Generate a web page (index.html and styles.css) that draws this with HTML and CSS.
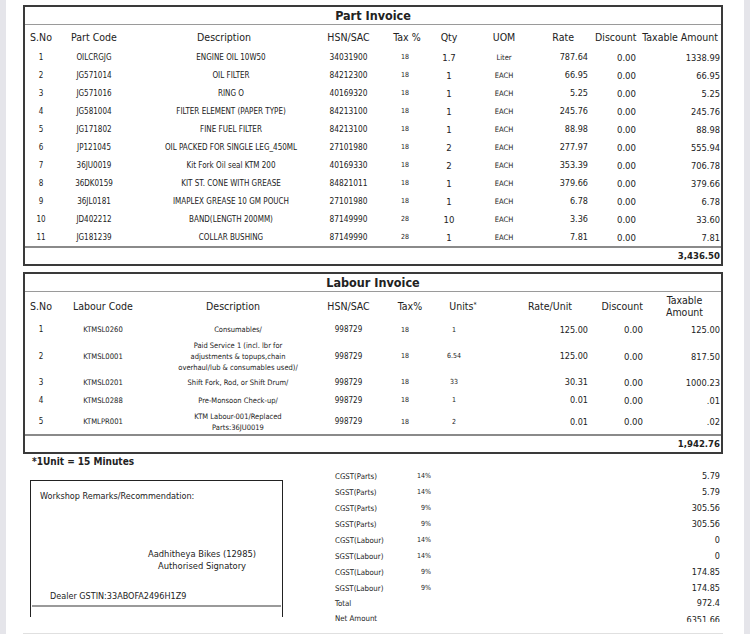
FILE: index.html
```html
<!DOCTYPE html>
<html>
<head>
<meta charset="utf-8">
<link rel="stylesheet" href="styles.css">
</head>
<body>
<div class="page">
  <div class="gutter"></div>
  <main class="sheet">
    <section class="inv">
      <div class="inv-title">Part Invoice</div>
      <table class="grid parts">
        <colgroup><col><col><col><col><col><col><col><col><col><col></colgroup>
        <thead>
          <tr><th>S.No</th><th>Part Code</th><th>Description</th><th>HSN/SAC</th><th>Tax %</th><th>Qty</th><th>UOM</th><th>Rate</th><th>Discount</th><th>Taxable Amount</th></tr>
        </thead>
        <tbody>
          <tr><td>1</td><td>OILCRGJG</td><td>ENGINE OIL 10W50</td><td>34031900</td><td>18</td><td>1.7</td><td>Liter</td><td>787.64</td><td>0.00</td><td>1338.99</td></tr>
          <tr><td>2</td><td>JG571014</td><td>OIL FILTER</td><td>84212300</td><td>18</td><td>1</td><td>EACH</td><td>66.95</td><td>0.00</td><td>66.95</td></tr>
          <tr><td>3</td><td>JG571016</td><td>RING O</td><td>40169320</td><td>18</td><td>1</td><td>EACH</td><td>5.25</td><td>0.00</td><td>5.25</td></tr>
          <tr><td>4</td><td>JG581004</td><td>FILTER ELEMENT (PAPER TYPE)</td><td>84213100</td><td>18</td><td>1</td><td>EACH</td><td>245.76</td><td>0.00</td><td>245.76</td></tr>
          <tr><td>5</td><td>JG171802</td><td>FINE FUEL FILTER</td><td>84213100</td><td>18</td><td>1</td><td>EACH</td><td>88.98</td><td>0.00</td><td>88.98</td></tr>
          <tr><td>6</td><td>JP121045</td><td>OIL PACKED FOR SINGLE LEG_450ML</td><td>27101980</td><td>18</td><td>2</td><td>EACH</td><td>277.97</td><td>0.00</td><td>555.94</td></tr>
          <tr><td>7</td><td>36JU0019</td><td>Kit Fork Oil seal KTM 200</td><td>40169330</td><td>18</td><td>2</td><td>EACH</td><td>353.39</td><td>0.00</td><td>706.78</td></tr>
          <tr><td>8</td><td>36DK0159</td><td>KIT ST. CONE WITH GREASE</td><td>84821011</td><td>18</td><td>1</td><td>EACH</td><td>379.66</td><td>0.00</td><td>379.66</td></tr>
          <tr><td>9</td><td>36JL0181</td><td>IMAPLEX GREASE 10 GM POUCH</td><td>27101980</td><td>18</td><td>1</td><td>EACH</td><td>6.78</td><td>0.00</td><td>6.78</td></tr>
          <tr><td>10</td><td>JD402212</td><td>BAND(LENGTH 200MM)</td><td>87149990</td><td>28</td><td>10</td><td>EACH</td><td>3.36</td><td>0.00</td><td>33.60</td></tr>
          <tr><td>11</td><td>JG181239</td><td>COLLAR BUSHING</td><td>87149990</td><td>28</td><td>1</td><td>EACH</td><td>7.81</td><td>0.00</td><td>7.81</td></tr>
        </tbody>
      </table>
      <div class="inv-total">3,436.50</div>
    </section>

    <section class="inv labour-box">
      <div class="inv-title">Labour Invoice</div>
      <table class="grid labour">
        <colgroup><col><col><col><col><col><col><col><col><col></colgroup>
        <thead>
          <tr><th>S.No</th><th>Labour Code</th><th>Description</th><th>HSN/SAC</th><th>Tax%</th><th>Units<sup>*</sup></th><th>Rate/Unit</th><th>Discount</th><th class="two">Taxable<br>Amount</th></tr>
        </thead>
        <tbody>
          <tr class="h19"><td>1</td><td>KTMSL0260</td><td>Consumables/</td><td>998729</td><td>18</td><td>1</td><td>125.00</td><td>0.00</td><td>125.00</td></tr>
          <tr class="h34"><td>2</td><td>KTMSL0001</td><td>Paid Service 1 (incl. lbr for<br>adjustments &amp; topups,chain<br>overhaul/lub &amp; consumables used)/</td><td>998729</td><td>18</td><td>6.54</td><td>125.00</td><td>0.00</td><td>817.50</td></tr>
          <tr class="h18"><td>3</td><td>KTMSL0201</td><td>Shift Fork, Rod, or Shift Drum/</td><td>998729</td><td>18</td><td>33</td><td>30.31</td><td>0.00</td><td>1000.23</td></tr>
          <tr class="h18"><td>4</td><td>KTMSL0288</td><td>Pre-Monsoon Check-up/</td><td>998729</td><td>18</td><td>1</td><td>0.01</td><td>0.00</td><td>.01</td></tr>
          <tr class="h25"><td>5</td><td>KTMLPR001</td><td>KTM Labour-001/Replaced<br>Parts:36JU0019</td><td>998729</td><td>18</td><td>2</td><td>0.01</td><td>0.00</td><td>.02</td></tr>
        </tbody>
      </table>
      <div class="inv-total">1,942.76</div>
    </section>

    <div class="note">*1Unit = 15 Minutes</div>

    <div class="foot">
      <div class="remarks">
        <div class="rem-title">Workshop Remarks/Recommendation:</div>
        <div class="sig">Aadhitheya Bikes (12985)<br>Authorised Signatory</div>
        <div class="gstin">Dealer GSTIN:33ABOFA2496H1Z9</div>
        <div class="rem-rule"></div>
      </div>
      <div class="summary">
        <span class="lbl">CGST(Parts)</span><span class="pct">14%</span><span class="val">5.79</span>
        <span class="lbl">SGST(Parts)</span><span class="pct">14%</span><span class="val">5.79</span>
        <span class="lbl">CGST(Parts)</span><span class="pct">9%</span><span class="val">305.56</span>
        <span class="lbl">SGST(Parts)</span><span class="pct">9%</span><span class="val">305.56</span>
        <span class="lbl">CGST(Labour)</span><span class="pct">14%</span><span class="val">0</span>
        <span class="lbl">SGST(Labour)</span><span class="pct">14%</span><span class="val">0</span>
        <span class="lbl">CGST(Labour)</span><span class="pct">9%</span><span class="val">174.85</span>
        <span class="lbl">SGST(Labour)</span><span class="pct">9%</span><span class="val">174.85</span>
        <span class="lbl">Total</span><span class="pct"></span><span class="val">972.4</span>
        <span class="lbl">Net Amount</span><span class="pct"></span><span class="val netval">6351.66</span>
      </div>
    </div>
    <div class="baseline"></div>
  </main>
  <div class="gutter"></div>
</div>
</body>
</html>
```

FILE: styles.css
```css
html, body {
  margin: 0;
  padding: 0;
  background: #ffffff;
}
body {
  font-family: "DejaVu Sans Condensed", "DejaVu Sans", sans-serif;
  font-stretch: condensed;
  color: #222222;
}
.page {
  display: flex;
  width: 750px;
  height: 634px;
  overflow: hidden;
}
.gutter {
  flex: none;
  width: 6px;
  background: #e5e5ea;
}
.sheet {
  flex: 1;
  padding: 5px 21px 0 17px;
}

/* invoice boxes */
.inv {
  border: 2px solid #3a3a3a;
}
.labour-box {
  margin-top: 6px;
}
.inv-title {
  height: 17px;
  line-height: 17px;
  text-align: center;
  font-weight: bold;
  font-size: 12.5px;
  border-bottom: 1px solid #9a9a9a;
}
.inv-total {
  border-top: 2px solid #8a8a8a;
  height: 16px;
  line-height: 16px;
  text-align: right;
  font-weight: bold;
  font-size: 9.5px;
  padding-right: 1px;
}

table.grid {
  width: 100%;
  border-collapse: collapse;
  table-layout: fixed;
}
.grid th {
  font-weight: normal;
  font-size: 10.5px;
  height: 23px;
  padding: 0;
  white-space: nowrap;
  text-align: center;
  vertical-align: middle;
}
.grid th sup {
  font-size: 7px;
  vertical-align: 3px;
  line-height: 0;
}
.grid td {
  padding: 0;
  height: 18px;
  white-space: nowrap;
  text-align: center;
  vertical-align: middle;
  font-size: 8px;
}

/* part table columns */
.parts col:nth-child(1) { width: 32px; }
.parts col:nth-child(2) { width: 74px; }
.parts col:nth-child(3) { width: 186px; }
.parts col:nth-child(4) { width: 63px; }
.parts col:nth-child(5) { width: 54px; }
.parts col:nth-child(6) { width: 30px; }
.parts col:nth-child(7) { width: 80px; }
.parts col:nth-child(8) { width: 51px; }
.parts col:nth-child(9) { width: 42px; }
.parts col:nth-child(10) { width: 84px; }

.parts th:nth-child(8) { text-align: right; padding-right: 21px; }
.parts th:nth-child(9) { text-align: right; padding-right: 2px; }
.parts th:nth-child(10) { text-align: right; padding-right: 3px; }

.parts td:nth-child(3) { padding-left: 14px; }
.parts td:nth-child(4) { font-size: 8.3px; }
.parts td:nth-child(5) { font-size: 7px; padding-right: 4px; }
.parts td:nth-child(6) { font-size: 9.5px; }
.parts td:nth-child(7) { font-size: 7.5px; }
.parts td:nth-child(8) { font-size: 9px; text-align: right; padding-right: 7px; }
.parts td:nth-child(9) { font-size: 9.5px; text-align: right; padding-right: 1px; }
.parts td:nth-child(10) { font-size: 9.2px; text-align: right; padding-right: 1px; }

/* labour table columns */
.labour col:nth-child(1) { width: 32px; }
.labour col:nth-child(2) { width: 92px; }
.labour col:nth-child(3) { width: 168px; }
.labour col:nth-child(4) { width: 63px; }
.labour col:nth-child(5) { width: 60px; }
.labour col:nth-child(6) { width: 46px; }
.labour col:nth-child(7) { width: 109px; }
.labour col:nth-child(8) { width: 50px; }
.labour col:nth-child(9) { width: 76px; }

.labour th { height: 28px; }
.labour th.two { line-height: 12px; padding-left: 3px; }
.labour th:nth-child(7) { padding-left: 19px; }
.labour th:nth-child(8) { text-align: right; padding-right: 2px; }

.labour tr.h19 td { height: 19px; }
.labour tr.h34 td { height: 34px; }
.labour tr.h18 td { height: 18px; }
.labour tr.h25 td { height: 25px; }

.labour td:nth-child(2) { font-size: 7.6px; }
.labour td:nth-child(3) {
  font-size: 7.5px;
  line-height: 11px;
  padding-left: 10px;
}
.labour td:nth-child(4) { font-size: 8px; }
.labour td:nth-child(5) { font-size: 7px; padding-right: 10px; }
.labour td:nth-child(6) { font-size: 7px; padding-right: 18px; }
.labour td:nth-child(7) { font-size: 9px; text-align: right; padding-right: 7px; }
.labour td:nth-child(8) { font-size: 9.5px; text-align: right; padding-right: 2px; }
.labour td:nth-child(9) { font-size: 9.2px; text-align: right; padding-right: 1px; }

/* footer */
.note {
  font-weight: bold;
  font-size: 10px;
  line-height: 16px;
  padding-left: 9px;
}
.foot {
  display: flex;
  align-items: flex-start;
}
.remarks {
  margin: 10px 0 0 7px;
  width: 253px;
  height: 137px;
  box-sizing: border-box;
  border: 1px solid #222222;
  border-bottom: none;
  display: flex;
  flex-direction: column;
  font-size: 9px;
}
.rem-title {
  margin-top: 8px;
  line-height: 14px;
  padding-left: 9px;
}
.sig {
  margin: 45px 0 0 91px;
  width: 160px;
  text-align: center;
  line-height: 12px;
  font-size: 9.3px;
}
.gstin {
  margin-top: 17px;
  line-height: 14px;
  padding-left: 19px;
}
.rem-rule {
  margin: 2px 1px 0;
  height: 2px;
  background: #9a9a9a;
}

.summary {
  margin: -2px 0 0 46px;
  width: 391px;
  height: 154px;
  overflow: hidden;
  display: grid;
  grid-template-columns: 72px 31px 1fr;
  grid-template-rows: repeat(8, 16px) 14px 16px;
  align-items: center;
}
.lbl {
  font-size: 7.8px;
  padding-left: 6px;
  white-space: nowrap;
}
.pct {
  font-size: 7px;
  text-align: right;
  padding-right: 1px;
}
.val {
  font-size: 9px;
  text-align: right;
}
.netval {
  align-self: start;
  padding-top: 5px;
  line-height: 11px;
}
.baseline {
  margin-top: 11px;
  border-top: 1px solid #e0e0e0;
}
```
